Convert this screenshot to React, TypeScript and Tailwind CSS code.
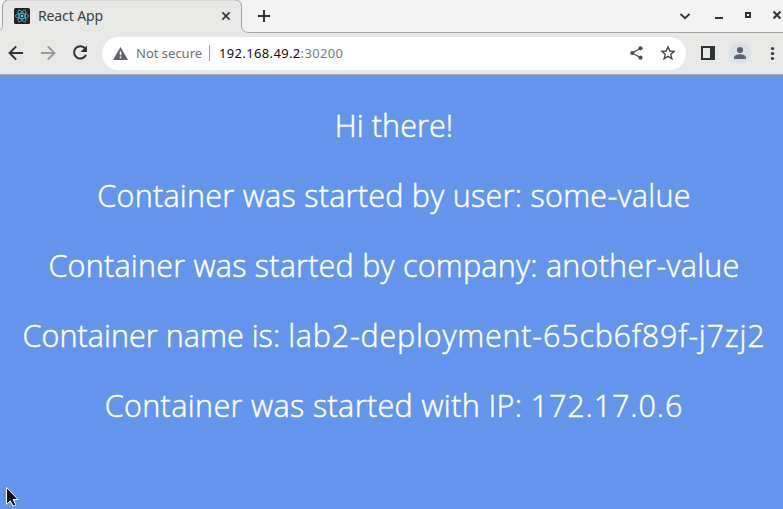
import React from "react";

function ReactMark() {
  return (
    <svg width="16" height="16" viewBox="0 0 16 16" className="mb-px shrink-0">
      <rect width="16" height="16" rx="1.5" fill="#202326" />
      <g fill="none" stroke="#53b5cf" strokeWidth="0.85">
        <ellipse cx="8" cy="8" rx="6.6" ry="2.6" />
        <ellipse cx="8" cy="8" rx="6.6" ry="2.6" transform="rotate(60 8 8)" />
        <ellipse cx="8" cy="8" rx="6.6" ry="2.6" transform="rotate(120 8 8)" />
      </g>
      <circle cx="8" cy="8" r="1.3" fill="#61dafb" />
    </svg>
  );
}

function TabStrip() {
  return (
    <div className="relative flex h-[33px] w-full items-center bg-[#f3f3f3]">
      <svg className="absolute left-0 top-0" width="783" height="33" viewBox="0 0 783 33">
        <path d="M0 30.5Q2.5 29 2.5 25V7Q2.5 -.5 10 -.5H234Q241.5 -.5 241.5 7V25Q241.5 32.5 249 32.5H783V33H0Z" fill="#e8e8e6" />
        <path d="M0 30.5Q2.5 29 2.5 25V7Q2.5 -.3 10 -.3H234Q241.5 -.3 241.5 7V25Q241.5 32.5 249 32.5H783" fill="none" stroke="#a4a4a3" />
      </svg>
      <div className="relative flex h-8 w-[242px] items-center pl-[14px]">
        <ReactMark />
        <span className="ml-2 whitespace-nowrap pb-0.5 text-[14px] leading-5 tracking-[-0.12px] text-[#3c4043]">React App</span>
        <svg className="mb-px ml-auto mr-[11px]" width="10" height="10" viewBox="0 0 10 10">
          <path d="M1.4 1.4L8.6 8.6M8.6 1.4L1.4 8.6" stroke="#2e3436" strokeWidth="1.7" />
        </svg>
      </div>
      <svg className="relative mb-px ml-4" width="12" height="12" viewBox="0 0 12 12">
        <path d="M6 0V12M0 6H12" stroke="#2e3436" strokeWidth="2" />
      </svg>
      <svg className="relative mb-px ml-auto" width="104" height="20" viewBox="0 0 104 20" fill="none" stroke="#2e3436">
        <path d="M1.5 8L6 12.2L10.5 8" strokeWidth="1.8" />
        <path d="M36 12H44" strokeWidth="2" />
        <rect x="67" y="7" width="4" height="4" strokeWidth="2" />
        <path d="M94.5 5.5L101.5 12.5M101.5 5.5L94.5 12.5" strokeWidth="2" />
      </svg>
    </div>
  );
}

function Toolbar() {
  return (
    <div className="flex h-[42px] items-center border-b border-[#aaa9a7] bg-[#e8e8e6]">
      <svg width="102" height="41" viewBox="0 0 102 41" fill="none" strokeWidth="2" className="shrink-0">
        <path d="M23 20H10M16.2 13.4L9.6 20L16.2 26.6" stroke="#2e3436" />
        <path d="M41 20H54M47.8 13.4L54.4 20L47.8 26.6" stroke="#999b9b" />
        <path d="M85.2 15.6A6.2 6.2 0 1 0 86 21.8" stroke="#2e3436" />
        <path d="M87 12.5V19H80.5Z" fill="#2e3436" />
      </svg>
      <div className="flex h-[33px] w-[584px] shrink-0 items-center rounded-full bg-white pb-px pl-[11px]">
        <svg width="15" height="13" viewBox="0 0 15 13">
          <path d="M7.5 0L15 13H0Z" fill="#5f6368" />
          <path d="M7.5 4.4V8.3M7.5 9.6V11.2" stroke="white" strokeWidth="1.6" />
        </svg>
        <span className="ml-2 w-[66px] whitespace-nowrap pb-px text-[13px] leading-5 text-[#6d7175]">Not secure</span>
        <span className="ml-[7px] h-4 w-px bg-[#999c9f]" />
        <span className="ml-[9px] whitespace-nowrap pb-px text-[13px] leading-5 tracking-[0.35px] text-[#777b7f]">
          <span className="text-[#111]">192.168.49.2</span>:30200
        </span>
        <svg className="ml-auto mr-[11px]" width="46" height="18" viewBox="0 0 46 18">
          <path d="M11.5 4.5L3 9L11.5 13.5" fill="none" stroke="#4b4f52" strokeWidth="1.4" />
          <g fill="#4b4f52">
            <circle cx="11.5" cy="4.3" r="2.1" />
            <circle cx="3.3" cy="9" r="2.1" />
            <circle cx="11.5" cy="13.7" r="2.1" />
          </g>
          <path d="M39 2.9L40.8 7L45.2 7.4L41.8 10.3L42.9 14.7L39 12.3L35.1 14.7L36.2 10.3L32.8 7.4L37.2 7Z" fill="none" stroke="#45494c" strokeWidth="1.4" />
        </svg>
      </div>
      <svg className="shrink-0" width="97" height="41" viewBox="0 0 97 41">
        <rect x="16" y="14" width="12" height="12" fill="none" stroke="#2e3436" strokeWidth="2" />
        <path d="M24 13H29V27H24Z" fill="#2e3436" />
        <circle cx="54" cy="20" r="11" fill="#dce0e8" />
        <circle cx="54" cy="17" r="3.1" fill="#5b6277" />
        <path d="M48 26V24.5C48 22.5 51.5 21.3 54 21.3S60 22.5 60 24.5V26Z" fill="#5b6277" />
        <g fill="#2e3436">
          <circle cx="86.5" cy="15.5" r="1.6" />
          <circle cx="86.5" cy="20.5" r="1.6" />
          <circle cx="86.5" cy="25.5" r="1.6" />
        </g>
      </svg>
    </div>
  );
}

export default function App() {
  return (
    <div className="relative flex h-[509px] w-[783px] flex-col overflow-hidden font-['Noto_Sans',sans-serif]">
      <TabStrip />
      <Toolbar />
      <main className="flex flex-1 flex-col items-center bg-[#6495ed] pl-[5px] pt-[15px] font-['Open_Sans','Noto_Sans',sans-serif] text-[30.5px] font-light leading-[70px] whitespace-nowrap text-white [-webkit-text-stroke:0.5px_white]">
        <p className="h-[70px] tracking-[0.1px]">Hi there!</p>
        <p className="h-[70px] tracking-[0.28px]">Container was started by user: some-value</p>
        <p className="h-[70px] tracking-[0.24px]">Container was started by company: another-value</p>
        <p className="h-[70px] tracking-[0.05px]">Container name is: <span className="tracking-[0.8px]">lab2-deployment-65cb6f89f-j7zj2</span></p>
        <p className="h-[70px] tracking-[0.38px]">Container was started with IP: <span className="tracking-[0.9px]">172.17.0.6</span></p>
      </main>
      <svg className="absolute left-[5px] top-[486px]" width="15" height="22" viewBox="0 0 15 22">
        <path d="M1.5 1.5V18.3L5.3 14.8L8 20.2L10.8 18.7L8.2 13.5H13.1Z" fill="#111" stroke="white" />
      </svg>
    </div>
  );
}
